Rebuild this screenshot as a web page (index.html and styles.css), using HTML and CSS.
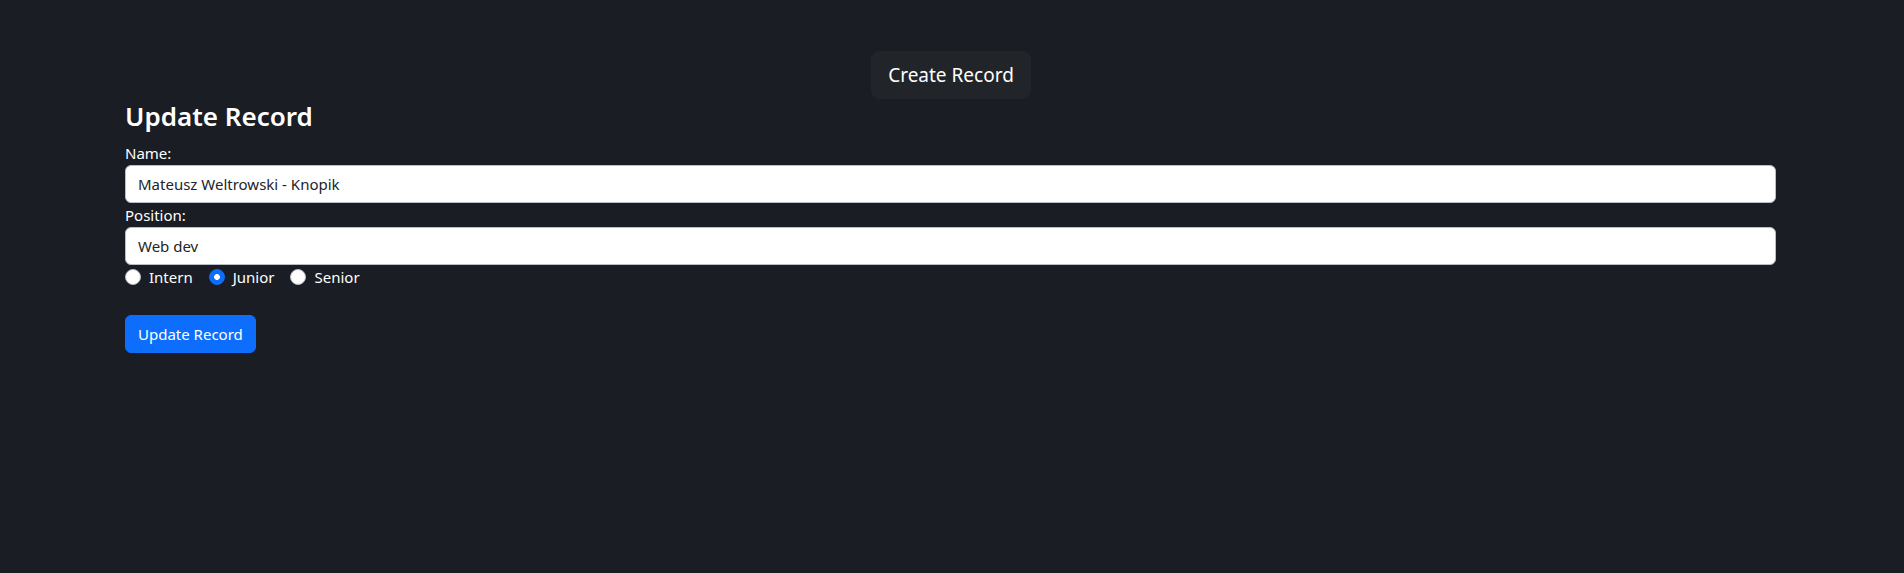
FILE: index.html
```html
<!DOCTYPE html>
<html lang="en">
<head>
<meta charset="utf-8">
<title>Update Record</title>
<link rel="stylesheet" href="styles.css">
</head>
<body>
<div class="topbar">
  <button class="btn-create">Create Record</button>
</div>
<div class="container">
  <h3 class="title">Update Record</h3>
  <form class="form">
    <label class="field-label" for="name">Name:</label>
    <input class="field-input" id="name" type="text" value="Mateusz Weltrowski - Knopik">
    <label class="field-label" for="position">Position:</label>
    <input class="field-input" id="position" type="text" value="Web dev">
    <div class="radios">
      <label class="radio-item"><input class="radio" type="radio" name="level"><span>Intern</span></label>
      <label class="radio-item"><input class="radio" type="radio" name="level" checked><span>Junior</span></label>
      <label class="radio-item"><input class="radio" type="radio" name="level"><span>Senior</span></label>
    </div>
    <div class="actions">
      <button type="button" class="btn-primary">Update Record</button>
    </div>
  </form>
</div>
</body>
</html>
```
FILE: styles.css
```css
* { box-sizing: border-box; }
html, body {
  margin: 0;
  background: #1a1d23;
  color: #ffffff;
  font-family: "Noto Sans", "Open Sans", sans-serif;
  font-size: 16px;
  line-height: 1.5;
}
.topbar {
  display: flex;
  justify-content: center;
  padding: 51px 2px 0 0;
}
.btn-create {
  font-family: inherit;
  font-size: 19px;
  line-height: 30px;
  padding: 8px 16px;
  border: 1px solid #212529;
  border-radius: 8px;
  background: #212529;
  color: #ffffff;
  cursor: pointer;
}
.container {
  padding: 0 128px 0 125px;
}
.title {
  margin: 0 0 8px;
  padding-top: 1px;
  font-size: 26px;
  line-height: 33px;
  font-weight: 600;
}
.form {
  display: flex;
  flex-direction: column;
}
.field-label {
  display: block;
  line-height: 24px;
  font-size: 15px;
}
.field-input {
  width: 100%;
  height: 38px;
  padding: 6px 12px;
  font-family: inherit;
  font-size: 15px;
  color: #212529;
  background: #ffffff;
  border: 1px solid #b8bec4;
  border-radius: 6px;
  outline: none;
}
.radios {
  display: flex;
  height: 24px;
  align-items: center;
}
.radio-item {
  display: flex;
  align-items: center;
  gap: 8px;
  margin-right: 16px;
  font-size: 15px;
  line-height: 24px;
}
.radio {
  appearance: none;
  -webkit-appearance: none;
  margin: 0;
  width: 16px;
  height: 16px;
  border-radius: 50%;
  background: #ffffff;
  border: 1px solid #b8bec4;
}
.radio:checked {
  background: radial-gradient(circle, #ffffff 0 2.6px, #0d6efd 3.2px);
  border-color: #0d6efd;
}
.actions {
  margin-top: 26px;
}
.btn-primary {
  font-family: inherit;
  font-size: 15px;
  line-height: 24px;
  padding: 6px 12px;
  border: 1px solid #0d6efd;
  border-radius: 6px;
  background: #0d6efd;
  color: #ffffff;
  cursor: pointer;
}
```
